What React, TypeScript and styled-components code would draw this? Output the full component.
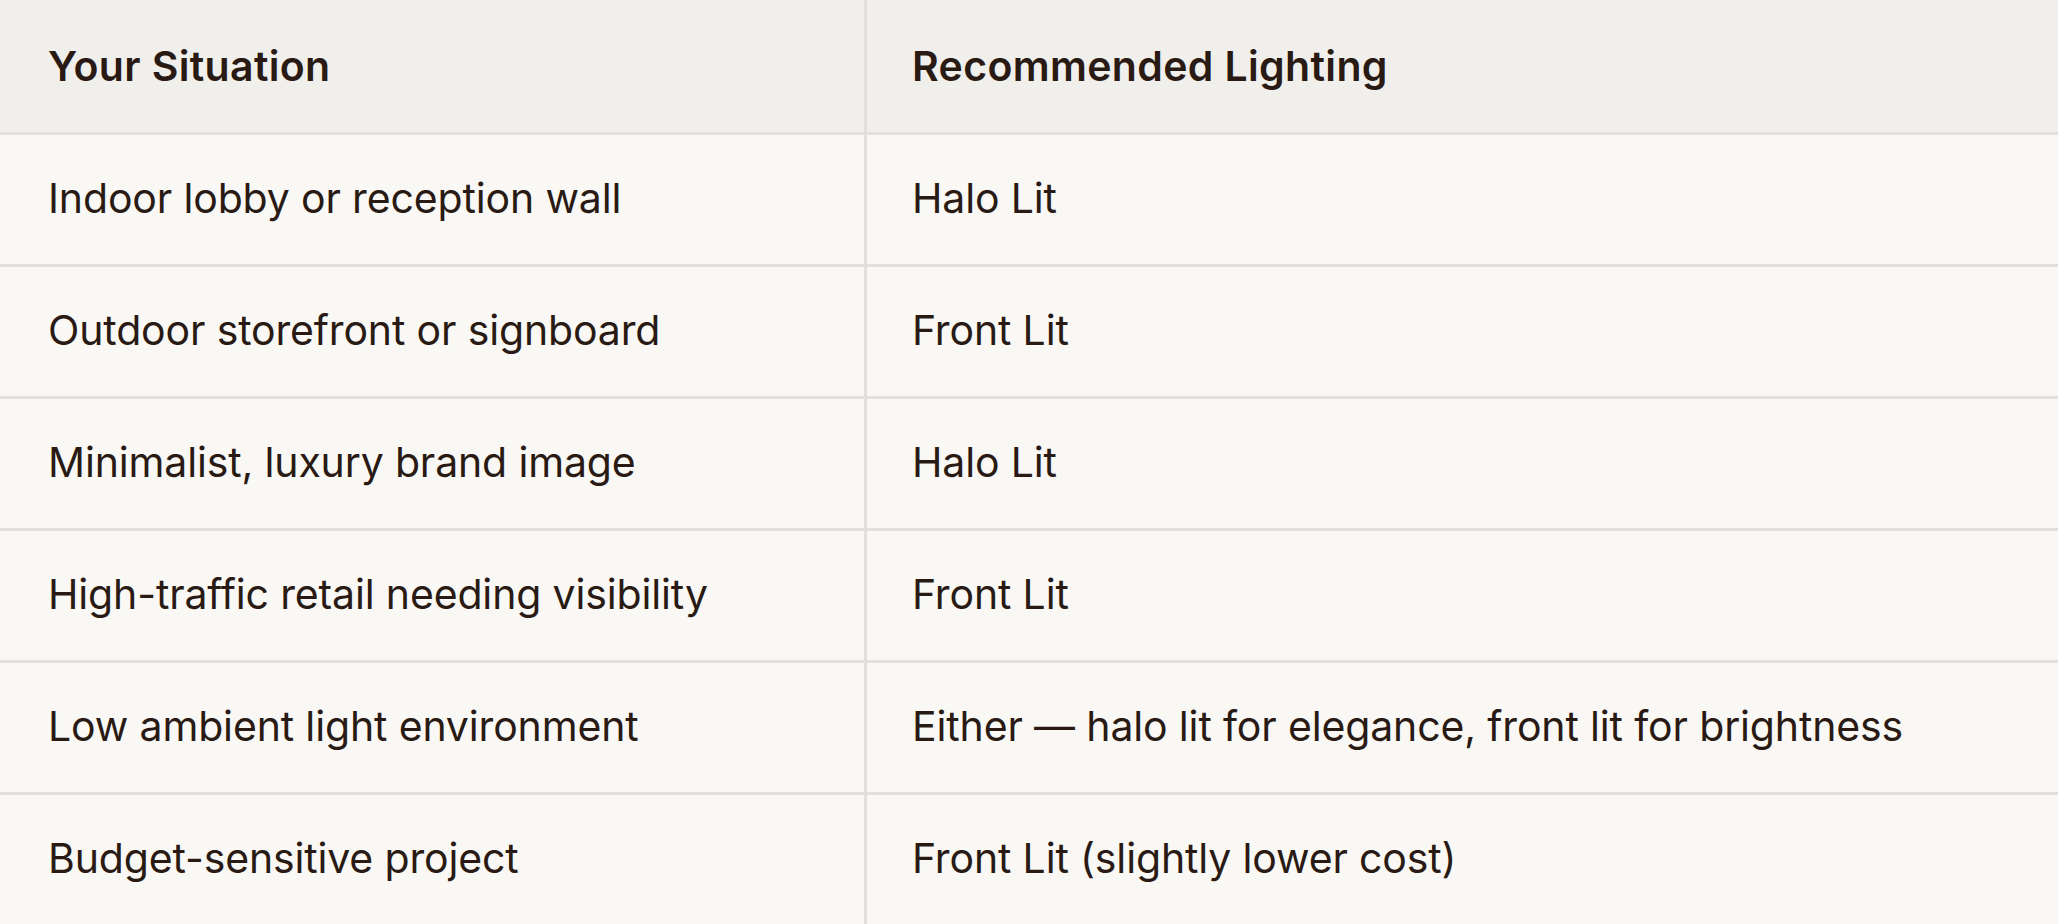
import { Fragment } from 'react';
import styled, { createGlobalStyle } from 'styled-components';

const GlobalStyle = createGlobalStyle`
  html, body {
    margin: 0;
    padding: 0;
    background: #f9f8f5;
  }
  body {
    font-family: Inter, 'Noto Sans', 'Liberation Sans', sans-serif;
    color: #2a1a14;
    overflow: hidden;
  }
`;

const Table = styled.div`
  display: grid;
  grid-template-columns: 867px 1fr;
  width: 2058px;
`;

const Cell = styled.div<{ $head?: boolean; $first?: boolean }>`
  height: ${(p) => (p.$head ? 135 : 132)}px;
  display: flex;
  align-items: center;
  padding: 0 ${(p) => (p.$first ? 48 : 45)}px;
  padding-bottom: ${(p) => (p.$head ? 0 : 3)}px;
  box-sizing: border-box;
  background: ${(p) => (p.$head ? '#f0efeb' : '#f9f8f5')};
  border-bottom: 3px solid #e1e0dd;
  border-right: ${(p) => (p.$first ? '3px solid #e1e0dd' : 'none')};
  font-size: 41px;
  font-weight: ${(p) => (p.$head ? 600 : 400)};
  letter-spacing: ${(p) => (p.$head ? '0.35px' : '-0.15px')};
  white-space: nowrap;
`;

const rows = [
  ['Indoor lobby or reception wall', 'Halo Lit'],
  ['Outdoor storefront or signboard', 'Front Lit'],
  ['Minimalist, luxury brand image', 'Halo Lit'],
  ['High-traffic retail needing visibility', 'Front Lit'],
  ['Low ambient light environment', 'Either — halo lit for elegance, front lit for brightness'],
  ['Budget-sensitive project', 'Front Lit (slightly lower cost)'],
];

export default function App() {
  return (
    <>
      <GlobalStyle />
      <Table>
        <Cell $head $first>Your Situation</Cell>
        <Cell $head>Recommended Lighting</Cell>
        {rows.map(([situation, lighting]) => (
          <Fragment key={situation}>
            <Cell $first>{situation}</Cell>
            <Cell>{lighting}</Cell>
          </Fragment>
        ))}
      </Table>
    </>
  );
}
